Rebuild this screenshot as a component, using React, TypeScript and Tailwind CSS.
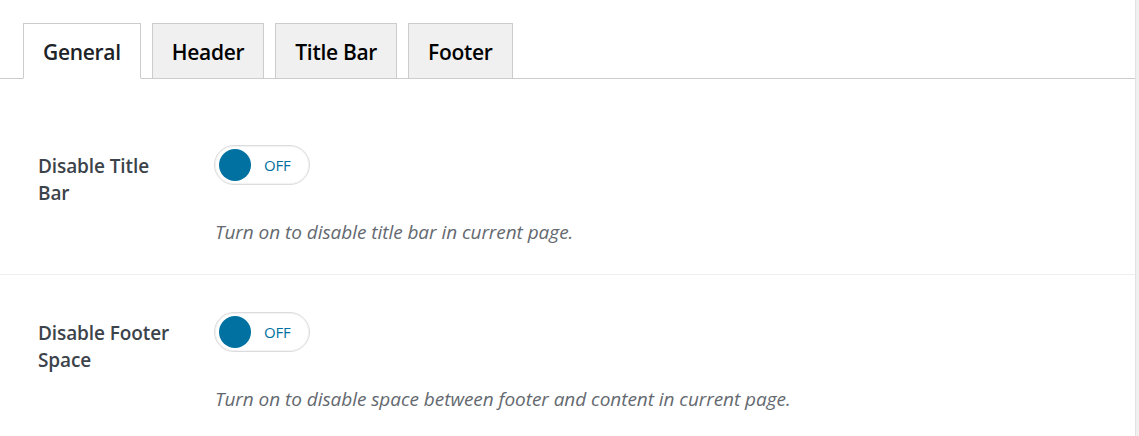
const tabs = ["General", "Header", "Title Bar", "Footer"];

const rows = [
  { label: "Disable Title Bar", desc: "Turn on to disable title bar in current page." },
  { label: "Disable Footer Space", desc: "Turn on to disable space between footer and content in current page." },
];

function Toggle() {
  return (
    <div className="flex items-center w-[96px] h-[40px] rounded-full border border-[#dcdcde] bg-white pl-[4px] shadow-[inset_0_0_0_1px_#f3f3f3]">
      <div className="w-[32px] h-[32px] rounded-full bg-[#0071a1]" />
      <span className="ml-[13px] text-[15px] text-[#0071a1] tracking-[-0.2px]">OFF</span>
    </div>
  );
}

export default function App() {
  return (
    <div className="flex w-[1139px] h-[436px] bg-[#f0f0f1] overflow-hidden" style={{ fontFamily: '"Open Sans", "Noto Sans", sans-serif' }}>
      <div className="w-[1136px] shrink-0 bg-white border-r border-[#e2e2e2]">
        <div className="flex gap-[11px] pl-[23px] pt-[23px] border-b border-[#cccccc]">
          {tabs.map((t, i) => (
            <div
              key={t}
              className={
                i === 0
                  ? "h-[56px] -mb-px px-[19px] pt-[3px] flex items-center border border-[#cccccc] border-b-white bg-white text-[21px] font-semibold text-[#1d2327] tracking-[-0.3px]"
                  : "h-[56px] -mb-px px-[19px] pt-[3px] flex items-center border border-[#cccccc] bg-[#f0f0f0] text-[21px] font-semibold text-[#000] tracking-[-0.3px]"
              }
            >
              {t}
            </div>
          ))}
        </div>
        <div className="pt-[28px]">
          {rows.map((r, i) => (
            <div key={r.label} className={i === 0 ? "flex pt-[38px] pb-[30px] border-b border-[#eeeeee]" : "flex pt-[37px] pb-[30px]"}>
              <div className="w-[214px] shrink-0 pl-[38px] pr-[36px] mt-[8px] text-[19px] leading-[27px] font-semibold text-[#3c434a] tracking-[-0.1px]">
                {r.label}
              </div>
              <div>
                <Toggle />
                <div className="mt-[35px] pl-[1px] text-[19px] leading-[24px] italic text-[#646970] tracking-[-0.05px]">{r.desc}</div>
              </div>
            </div>
          ))}
        </div>
      </div>
    </div>
  );
}
